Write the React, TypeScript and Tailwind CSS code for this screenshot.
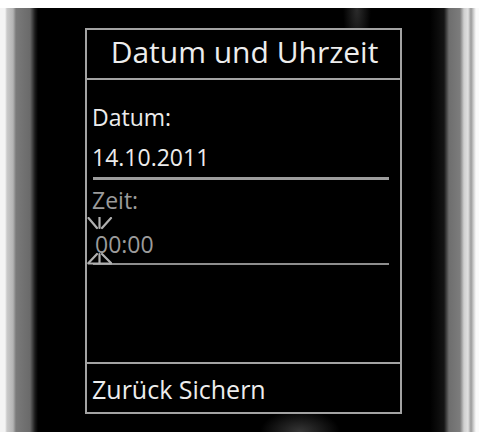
import React from 'react';

function BlinkCursor() {
  // the little "sparkle" marks above and below the active digit
  return (
    <svg width="26" height="48" viewBox="0 0 26 48" fill="none" stroke="#b0b0b0" strokeWidth="2.2" strokeLinecap="round">
      <line x1="1.5" y1="1" x2="10" y2="11" />
      <line x1="12.5" y1="0.5" x2="12.5" y2="11" />
      <line x1="24" y1="1" x2="15" y2="11" />
      <line x1="10" y1="37" x2="1.5" y2="46" />
      <line x1="12.5" y1="37" x2="12.5" y2="46" />
      <line x1="15" y1="37" x2="24" y2="46" />
      <line x1="1.5" y1="46.5" x2="24" y2="46.5" />
    </svg>
  );
}

export default function App() {
  return (
    <div className="w-[479px] h-[432px] bg-white pt-[8px] overflow-hidden" style={{ fontFamily: '"Open Sans", "Noto Sans", sans-serif' }}>
      <div className="h-full pl-[85px] pt-[20px] bg-[radial-gradient(ellipse_14px_50px_at_357px_0px,rgba(110,110,110,0.4),transparent),radial-gradient(ellipse_40px_22px_at_300px_100%,rgba(110,110,110,0.5),transparent),linear-gradient(to_right,#f4f4f4_0px,#f4f4f4_5px,#c9c9c9_7px,#b4b4b4_13px,#7a7a7a_16px,#6a6a6a_30px,#1a1a1a_35px,#000_38px,#000_430px,#141414_444px,#6e6e6e_449px,#7c7c7c_460px,#cfcfcf_464px,#e0e0e0_468px,#9a9a9a_471px,#d8d8d8_474px,#fafafa_476px)]">
        <div className="w-[317px] h-[386px] border-2 border-[#a3a3a3] bg-black flex flex-col">
          <div className="h-[50px] border-b-2 border-[#a3a3a3] flex items-center justify-center pb-[4px] pl-[2px]">
            <span className="text-[30px] leading-[34px] text-[#ededed]">Datum und Uhrzeit</span>
          </div>

          <div className="flex-1 relative pt-[25px]">
            <div className="pl-[5px] text-[23px] leading-[24px] text-[#ececec]">Datum:</div>
            <div className="pl-[5px] mt-[16px] text-[23px] leading-[24px] text-[#ececec]">14.10.2011</div>
            <div className="ml-[6px] mr-[11px] mt-[8px] h-[3px] bg-[#9d9d9d]" />
            <div className="pl-[5px] mt-[8px] text-[23px] leading-[24px] text-[#9b9b9b]">Zeit:</div>
            <div className="pl-[8px] mt-[20px] text-[23px] leading-[24px] text-[#9b9b9b]">00:00</div>
            <div className="ml-[6px] mr-[11px] mt-[7px] h-[2px] bg-[#8e8e8e]" />
            <div className="absolute left-0 top-[137px]">
              <BlinkCursor />
            </div>
          </div>

          <div className="h-[50px] border-t-2 border-[#a3a3a3] flex items-center pl-[5px] pt-[2px]">
            <span className="text-[25px] leading-[28px] text-[#ededed]">Zurück Sichern</span>
          </div>
        </div>
      </div>
    </div>
  );
}
